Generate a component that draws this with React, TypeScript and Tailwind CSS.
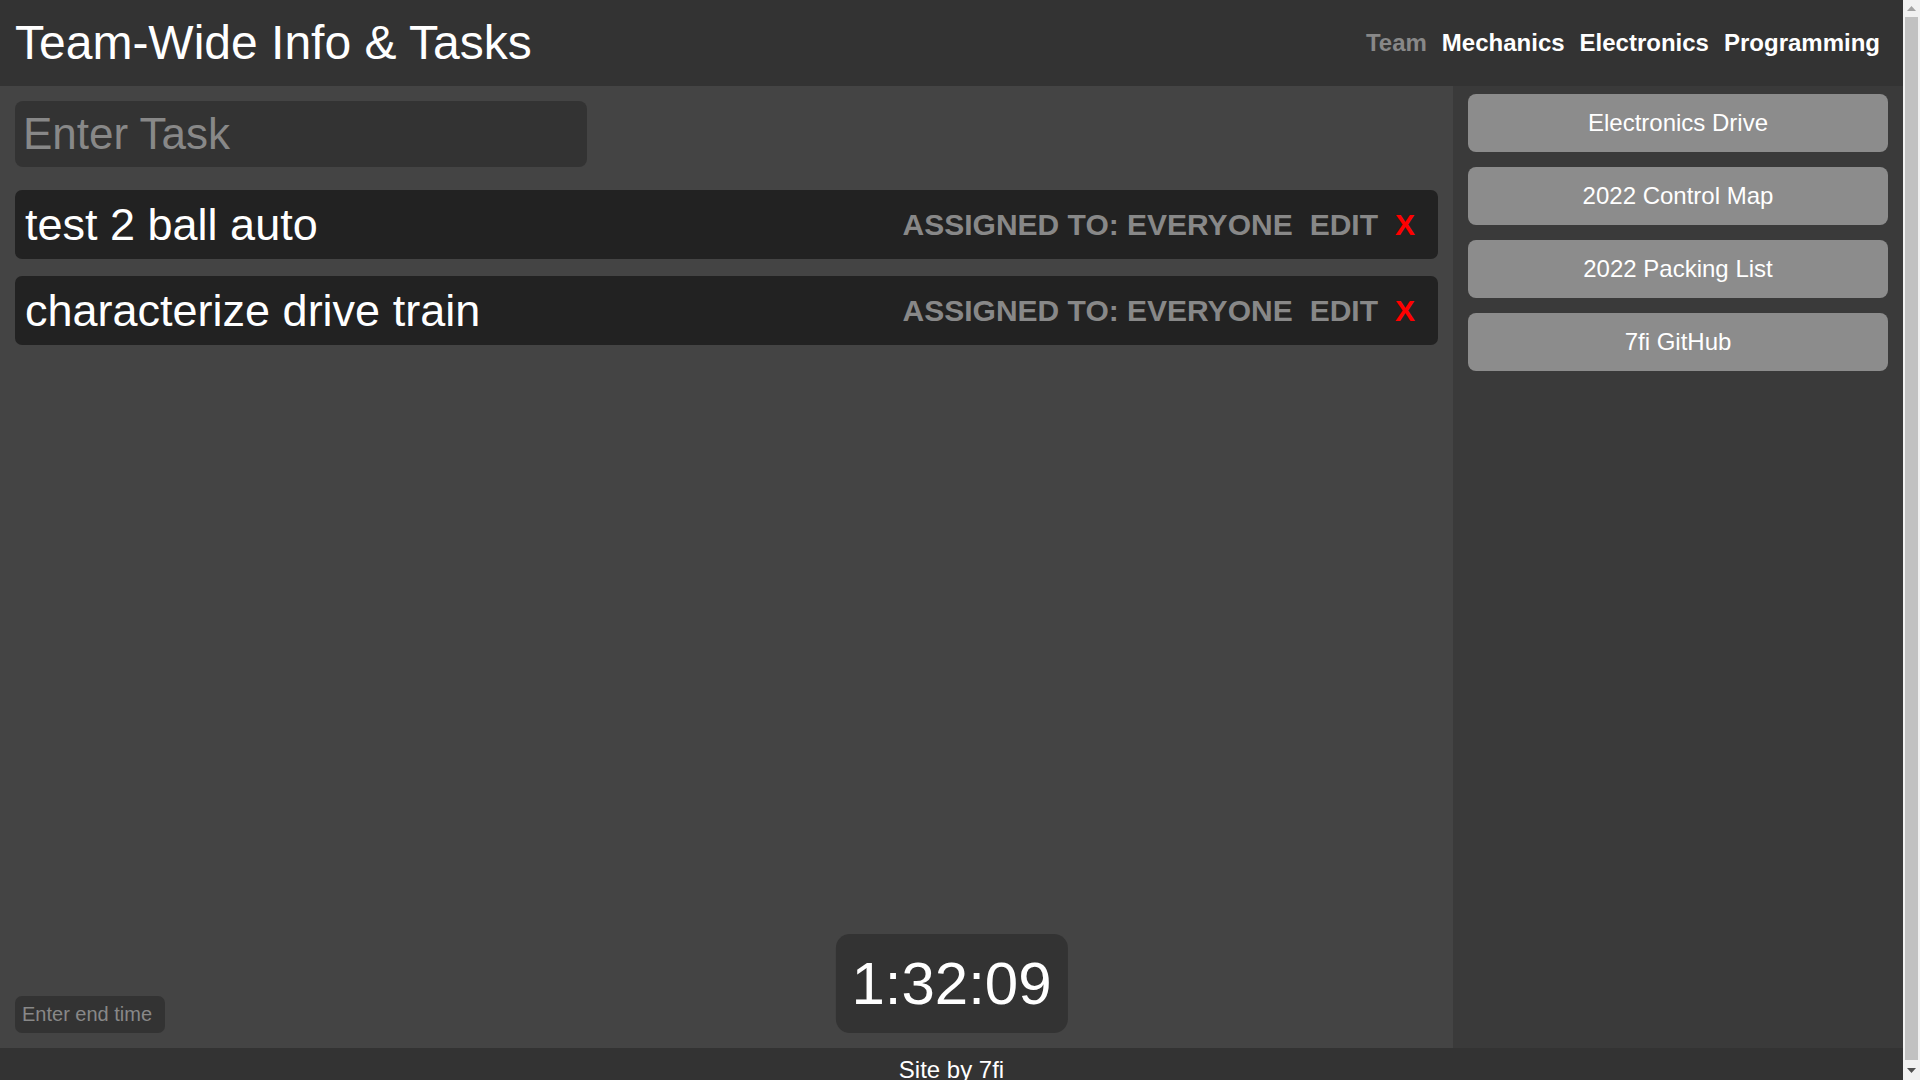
import { useState } from 'react';

const navLinks = [
  { label: 'Team', active: true },
  { label: 'Mechanics', active: false },
  { label: 'Electronics', active: false },
  { label: 'Programming', active: false },
];

const quickLinks = ['Electronics Drive', '2022 Control Map', '2022 Packing List', '7fi GitHub'];

const App = () => {
  const [tasks] = useState(['test 2 ball auto', 'characterize drive train']);

  return (
    <div className="flex h-screen overflow-hidden font-['Liberation_Sans',Arial,sans-serif] text-white">
      <div className="flex min-w-0 flex-1 flex-col bg-[#444444]">
        {/* Header */}
        <header className="flex h-[86px] shrink-0 items-center justify-between bg-[#333333] pl-[15px] pr-[23px]">
          <h1 className="text-[48px] leading-none font-normal">Team-Wide Info &amp; Tasks</h1>
          <nav className="flex items-center gap-[15px]">
            {navLinks.map((link) => (
              <a
                key={link.label}
                className={`text-[24px] font-bold leading-none ${link.active ? 'text-[#888888]' : 'text-white'}`}
              >
                {link.label}
              </a>
            ))}
          </nav>
        </header>

        {/* Main area */}
        <div className="relative flex h-[962px] shrink-0">
          <main className="flex flex-1 flex-col bg-[#444444] p-[15px]">
            <input
              placeholder="Enter Task"
              className="h-[66px] w-[572px] rounded-[8px] bg-[#333333] pl-[8px] text-[44px] text-white outline-none placeholder:text-[#888888]"
            />

            <div className="mt-[23px] flex flex-col gap-[17px]">
              {tasks.map((task) => (
                <div
                  key={task}
                  className="flex h-[69px] items-center justify-between rounded-[7px] bg-[#222222] pl-[10px] pr-[23px]"
                >
                  <span className="text-[45px] leading-none">{task}</span>
                  <div className="flex items-center gap-[17px] text-[30px] font-bold leading-none">
                    <span className="text-[#888888]">ASSIGNED TO: EVERYONE</span>
                    <span className="text-[#888888]">EDIT</span>
                    <span className="text-[#ff0000]">X</span>
                  </div>
                </div>
              ))}
            </div>

            <input
              placeholder="Enter end time"
              className="mt-auto h-[37px] w-[150px] rounded-[7px] bg-[#333333] pl-[7px] text-[20px] text-white outline-none placeholder:text-[#888888]"
            />
          </main>

          {/* Sidebar links */}
          <aside className="flex w-[450px] flex-col gap-[15px] bg-[#3a3a3a] px-[15px] pt-[8px]">
            {quickLinks.map((label) => (
              <button
                key={label}
                className="flex h-[58px] items-center justify-center rounded-[8px] bg-[#8c8c8c] text-[24px] text-white"
              >
                {label}
              </button>
            ))}
          </aside>

          {/* Countdown */}
          <div className="absolute bottom-[15px] left-1/2 -translate-x-1/2 rounded-[14px] bg-[#333333] px-[16px] py-[15px] text-[60px] leading-[69px]">
            1:32:09
          </div>
        </div>

        {/* Footer */}
        <footer className="flex h-[48px] shrink-0 justify-center bg-[#333333] pt-[8px] text-[24px] leading-[28px]">
          Site by 7fi
        </footer>
      </div>

      {/* Page scrollbar */}
      <div className="flex w-[17px] shrink-0 flex-col items-center bg-[#f1f1f1]">
        <div className="flex h-[17px] items-center justify-center">
          <svg width="9" height="5" viewBox="0 0 9 5">
            <path d="M4.5 0 L9 5 L0 5 Z" fill="#a3a3a3" />
          </svg>
        </div>
        <div className="w-[13px] flex-1 bg-[#c1c1c1]" />
        <div className="flex h-[20px] items-center justify-center">
          <svg width="9" height="5" viewBox="0 0 9 5">
            <path d="M0 0 L9 0 L4.5 5 Z" fill="#505050" />
          </svg>
        </div>
      </div>
    </div>
  );
};

export default App;
